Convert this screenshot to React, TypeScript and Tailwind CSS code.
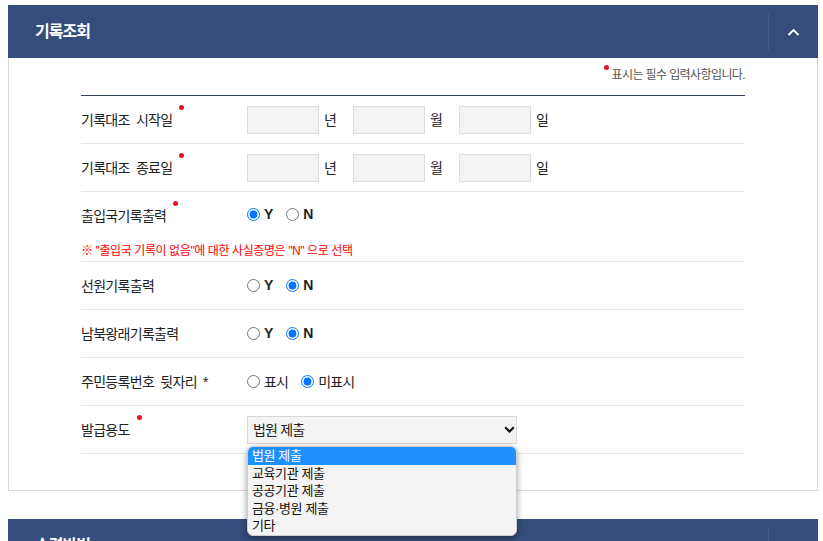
import React from "react";

function Dot() {
  return (
    <span className="absolute -right-[12px] -top-[5px] w-[5px] h-[5px] rounded-full bg-[#e8141b]" />
  );
}

function Label({ text, required }: { text: string; required?: boolean }) {
  return (
    <div className="w-[166px] shrink-0 text-[14px] leading-[20px] text-[#222] tracking-[-0.7px] [word-spacing:3px]">
      <span className="relative inline-block">
        {text}
        {required && <Dot />}
      </span>
    </div>
  );
}

function Header({ title }: { title: string }) {
  return (
    <div className="h-[53px] bg-[#344d7a] flex items-center">
      <h2 className="flex-1 pl-[27px] text-white text-[16px] font-bold tracking-[-1px] leading-[20px]">
        {title}
      </h2>
      <div className="w-px h-[36px] bg-[#4b5f86]" />
      <div className="w-[49px] h-full flex items-center justify-center">
        <svg width="13" height="8" viewBox="0 0 13 8" fill="none">
          <polyline points="1.5,7 6.5,2 11.5,7" stroke="#ffffff" strokeWidth="1.8" />
        </svg>
      </div>
    </div>
  );
}

function DateInputs() {
  const units = ["년", "월", "일"];
  return (
    <div className="flex items-center">
      {units.map((u) => (
        <div key={u} className="flex items-center">
          <div className="w-[72px] h-[28px] bg-[#f4f4f4] border border-[#dcdcdc]" />
          <span className="ml-[5px] w-[14px] mr-[15px] text-[14px] leading-[20px] text-[#222]">{u}</span>
        </div>
      ))}
    </div>
  );
}

function Radios({
  name,
  options,
  checked,
  bold,
}: {
  name: string;
  options: string[];
  checked: number;
  bold?: boolean;
}) {
  return (
    <div className="flex items-center">
      {options.map((o, i) => (
        <label key={o} className="flex items-center mr-[13px]">
          <input
            type="radio"
            name={name}
            defaultChecked={i === checked}
            className="w-[13px] h-[13px] m-0"
          />
          <span
            className={
              "ml-[4px] text-[14px] leading-[20px] text-[#222] " +
              (bold ? "font-bold -mt-[2px]" : "tracking-[-0.8px]")
            }
          >
            {o}
          </span>
        </label>
      ))}
    </div>
  );
}

function Row({ children }: { children: React.ReactNode }) {
  return (
    <div className="flex items-center h-[48px] border-b border-[#e6e6e6]">
      {children}
    </div>
  );
}

export default function App() {
  const items = ["법원 제출", "교육기관 제출", "공공기관 제출", "금융·병원 제출", "기타"];
  return (
    <div className="relative w-[823px] h-[541px] overflow-hidden bg-white font-['Liberation_Sans','Noto_Sans_CJK_KR',sans-serif]">
      <div className="pt-[5px] pl-[8px] pr-[5px]">
        <section>
          <Header title="기록조회" />
          <div className="border-x border-b border-[#d7d7d7] px-[72px] pb-[36px]">
            <div className="flex justify-end items-center pt-[8px] pb-[11px] text-[12px] leading-[18px] text-[#555] tracking-[-0.6px]">
              <span className="relative inline-block">
                <span className="absolute -left-[8px] -top-[1px] w-[5px] h-[5px] rounded-full bg-[#e8141b]" />
                표시는 필수 입력사항입니다.
              </span>
            </div>
            <div className="border-t border-[#33405e]">
              <Row>
                <Label text="기록대조 시작일" required />
                <DateInputs />
              </Row>
              <Row>
                <Label text="기록대조 종료일" required />
                <DateInputs />
              </Row>
              <div className="border-b border-[#e6e6e6]">
                <div className="flex items-center h-[48px]">
                  <Label text="출입국기록출력" required />
                  <div className="-mt-[3px]">
                    <Radios name="immig" options={["Y", "N"]} checked={0} bold />
                  </div>
                </div>
                <div className="h-[21px] pt-[3px] text-[12px] leading-[16px] text-[#ff0000] tracking-[-0.4px]">
                  ※ "출입국 기록이 없음"에 대한 사실증명은 "N" 으로 선택
                </div>
              </div>
              <Row>
                <Label text="선원기록출력" />
                <Radios name="crew" options={["Y", "N"]} checked={1} bold />
              </Row>
              <Row>
                <Label text="남북왕래기록출력" />
                <Radios name="nk" options={["Y", "N"]} checked={1} bold />
              </Row>
              <Row>
                <Label text="주민등록번호 뒷자리 *" />
                <Radios name="rrn" options={["표시", "미표시"]} checked={1} />
              </Row>
              <Row>
                <Label text="발급용도" required />
                <div className="w-[270px] h-[28px] bg-[#f4f4f4] border border-[#d8d8d8] flex items-center justify-between pl-[5px] pr-[1px]">
                  <span className="text-[14px] leading-[20px] text-[#222] tracking-[-0.8px]">법원 제출</span>
                  <svg width="11" height="7" viewBox="0 0 11 7" fill="none">
                    <polyline points="1.2,1.2 5.5,5.5 9.8,1.2" stroke="#111" strokeWidth="2.2" />
                  </svg>
                </div>
              </Row>
            </div>
          </div>
        </section>
        <section className="mt-[28px]">
          <Header title="수령방법" />
        </section>
      </div>
      <ul className="absolute left-[247px] top-[446px] w-[270px] h-[90px] bg-[#f4f4f4] rounded-[6px] overflow-hidden shadow-[0_2px_6px_rgba(0,0,0,0.4)] border border-[#cfcfcf]">
        {items.map((it, i) => (
          <li
            key={it}
            className={
              "h-[17.6px] pl-[4px] text-[13px] leading-[17.6px] tracking-[-0.4px] " +
              (i === 0 ? "bg-[#1e90ff] text-white" : "text-[#111]")
            }
          >
            {it}
          </li>
        ))}
      </ul>
    </div>
  );
}
